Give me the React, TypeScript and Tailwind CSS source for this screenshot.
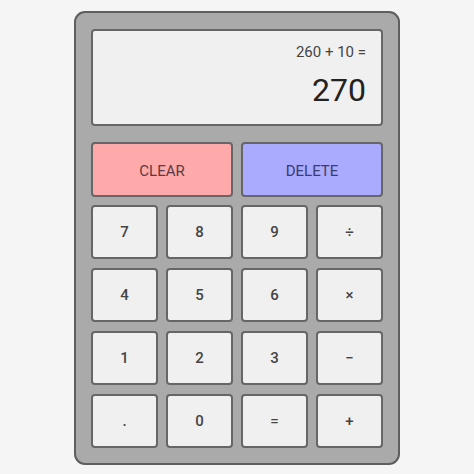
const keys = ['7', '8', '9', '÷', '4', '5', '6', '×', '1', '2', '3', '−', '.', '0', '=', '+'];

export default function App() {
  return (
    <div className="min-h-[474px] bg-[#f5f5f5] pt-[11px] font-['Roboto',sans-serif]">
      <div className="mx-auto w-[326px] rounded-[11px] border-2 border-[#5e5e5e] bg-[#aaaaaa] px-[15px] pb-[15px] pt-[16px]">
        <div className="flex h-[97px] flex-col items-end rounded-[4px] border-2 border-[#666] bg-[#f0f0f0] pr-[15px] pt-[9px]">
          <div className="text-[15px] leading-[24px] text-[#444]">260 + 10 =</div>
          <div className="mt-[6px] text-[32px] leading-[40px] text-[#222]">270</div>
        </div>
        <div className="mt-[16px] grid grid-cols-2 gap-[8px]">
          <button className="h-[55px] rounded-[4px] border-2 border-[#666] bg-[#ffaaaa] pt-[3px] text-[15px] text-[#5a3a44]">
            CLEAR
          </button>
          <button className="h-[55px] rounded-[4px] border-2 border-[#666] bg-[#aaaaff] pt-[3px] text-[15px] text-[#3c3c6c]">
            DELETE
          </button>
        </div>
        <div className="mt-[8px] grid grid-cols-4 gap-x-[8px] gap-y-[9px]">
          {keys.map((k) => (
            <button
              key={k}
              className="h-[54px] rounded-[4px] border-2 border-[#666] bg-[#f0f0f0] text-[15px] font-medium text-[#444]"
            >
              {k}
            </button>
          ))}
        </div>
      </div>
    </div>
  );
}
